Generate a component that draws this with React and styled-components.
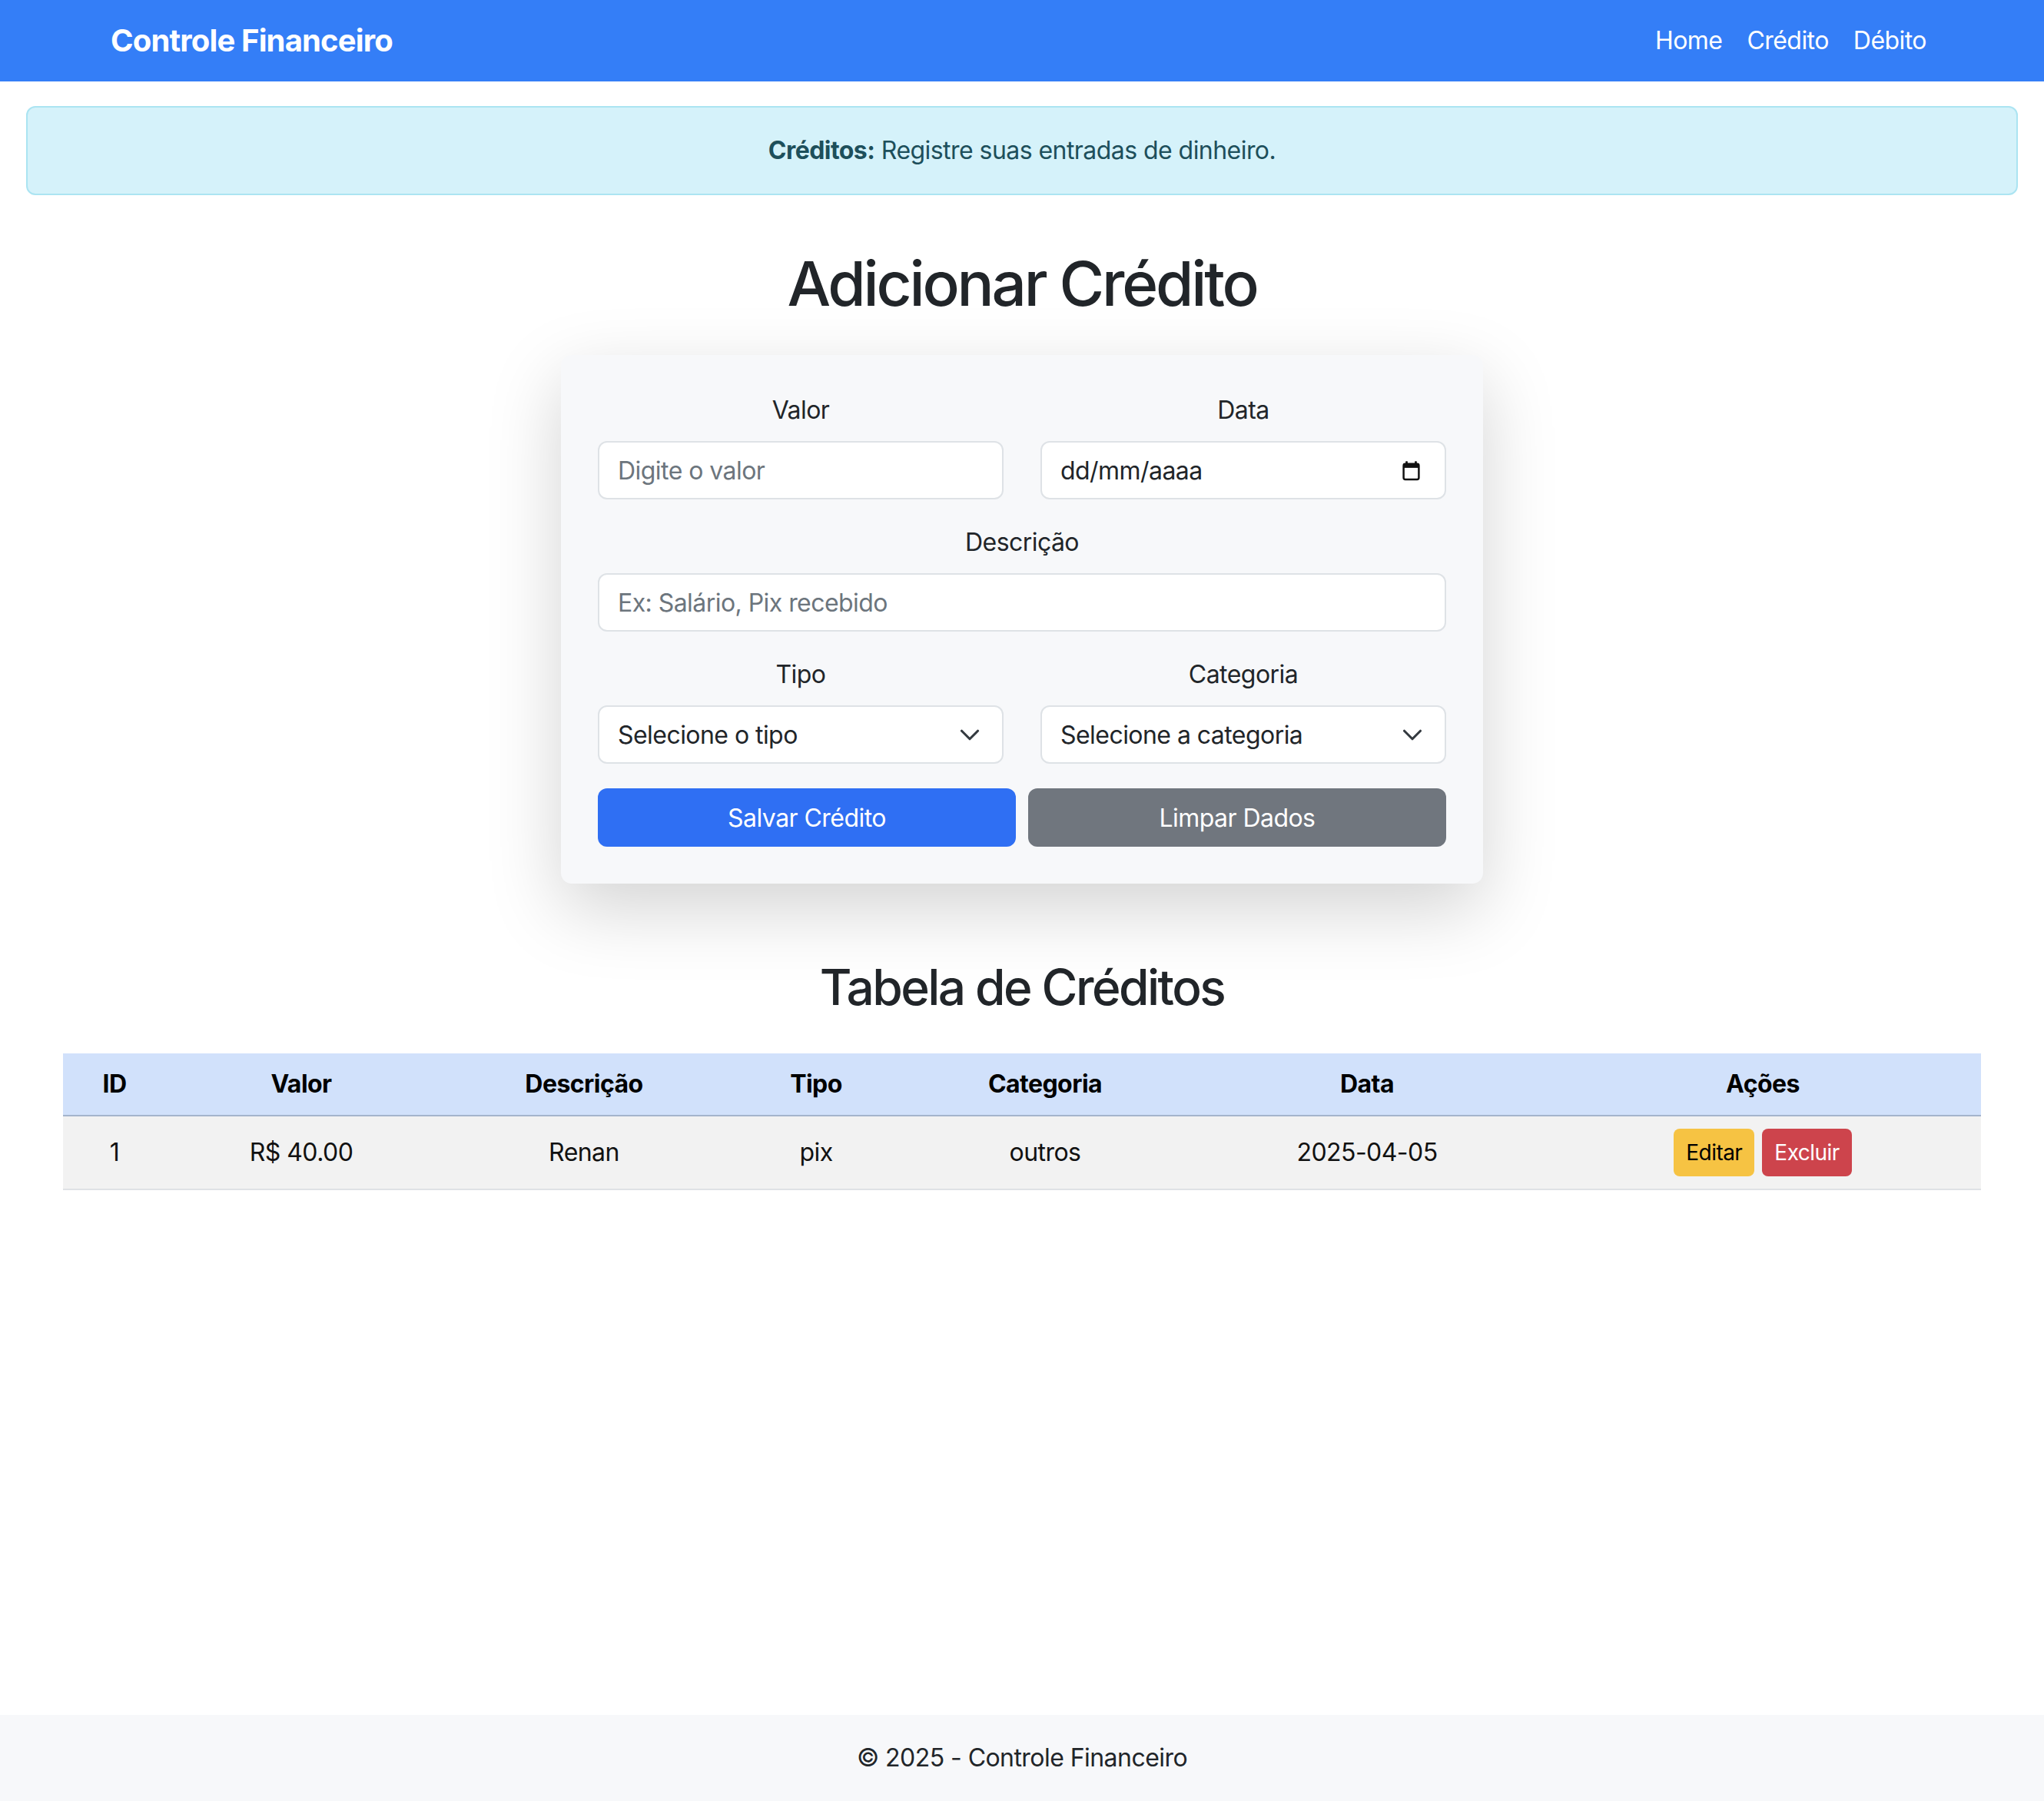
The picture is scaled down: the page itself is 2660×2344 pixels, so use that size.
import React from "react";
import styled, { createGlobalStyle } from "styled-components";

const GlobalStyle = createGlobalStyle`
  * {
    box-sizing: border-box;
  }

  body {
    margin: 0;
    font-family: Inter, "Liberation Sans", sans-serif;
    letter-spacing: -0.55px;
    color: #212529;
    background: #ffffff;
  }
`;

const credits = [
  {
    id: 1,
    valor: "R$ 40.00",
    descricao: "Renan",
    tipo: "pix",
    categoria: "outros",
    data: "2025-04-05",
  },
];

const columns = [
  { title: "ID", width: 134 },
  { title: "Valor", width: 352 },
  { title: "Descrição", width: 384 },
  { title: "Tipo", width: 220 },
  { title: "Categoria", width: 376 },
  { title: "Data", width: 462 },
  { title: "Ações", width: 568 },
];

function ChevronIcon() {
  return (
    <svg width="28" height="21" viewBox="0 0 16 12" fill="none">
      <path
        d="m2 3 6 6 6-6"
        stroke="#343a40"
        strokeWidth="1.8"
        strokeLinecap="round"
        strokeLinejoin="round"
      />
    </svg>
  );
}

function CalendarIcon() {
  return (
    <svg width="27" height="27" viewBox="0 0 24 24" fill="none">
      <rect x="5.5" y="1" width="2.4" height="4" rx="0.6" fill="#111" />
      <rect x="16.1" y="1" width="2.4" height="4" rx="0.6" fill="#111" />
      <rect
        x="3.2"
        y="4.2"
        width="17.6"
        height="18"
        rx="2"
        stroke="#111"
        strokeWidth="2.2"
      />
      <rect x="3.2" y="4.2" width="17.6" height="4.6" fill="#111" />
    </svg>
  );
}

function App() {
  return (
    <Page>
      <GlobalStyle />
      <Navbar>
        <Brand>Controle Financeiro</Brand>
        <NavLinks>
          <NavLink>Home</NavLink>
          <NavLink>Crédito</NavLink>
          <NavLink>Débito</NavLink>
        </NavLinks>
      </Navbar>

      <Main>
        <Alert>
          <strong>Créditos:</strong> Registre suas entradas de dinheiro.
        </Alert>

        <PageTitle>Adicionar Crédito</PageTitle>

        <Card>
          <FormRow>
            <Field>
              <Label>Valor</Label>
              <Input placeholder="Digite o valor" />
            </Field>
            <Field>
              <Label>Data</Label>
              <FakeInput $iconGap={30}>
                <span>dd/mm/aaaa</span>
                <CalendarIcon />
              </FakeInput>
            </Field>
          </FormRow>

          <Field>
            <Label>Descrição</Label>
            <Input placeholder="Ex: Salário, Pix recebido" />
          </Field>

          <FormRow>
            <Field>
              <Label>Tipo</Label>
              <FakeInput $iconGap={28}>
                <span>Selecione o tipo</span>
                <ChevronIcon />
              </FakeInput>
            </Field>
            <Field>
              <Label>Categoria</Label>
              <FakeInput $iconGap={28}>
                <span>Selecione a categoria</span>
                <ChevronIcon />
              </FakeInput>
            </Field>
          </FormRow>

          <ButtonRow>
            <Button $variant="primary">Salvar Crédito</Button>
            <Button $variant="secondary">Limpar Dados</Button>
          </ButtonRow>
        </Card>

        <SectionTitle>Tabela de Créditos</SectionTitle>

        <TableWrapper>
          <Table>
            <colgroup>
              {columns.map((col) => (
                <col key={col.title} style={{ width: col.width }} />
              ))}
            </colgroup>
            <thead>
              <tr>
                {columns.map((col) => (
                  <Th key={col.title}>{col.title}</Th>
                ))}
              </tr>
            </thead>
            <tbody>
              {credits.map((item) => (
                <tr key={item.id}>
                  <Td>{item.id}</Td>
                  <Td>{item.valor}</Td>
                  <Td>{item.descricao}</Td>
                  <Td>{item.tipo}</Td>
                  <Td>{item.categoria}</Td>
                  <Td>{item.data}</Td>
                  <Td>
                    <Actions>
                      <SmallButton $variant="warning">Editar</SmallButton>
                      <SmallButton $variant="danger">Excluir</SmallButton>
                    </Actions>
                  </Td>
                </tr>
              ))}
            </tbody>
          </Table>
        </TableWrapper>
      </Main>

      <Footer>© 2025 - Controle Financeiro</Footer>
    </Page>
  );
}

export default App;

const Page = styled.div`
  min-height: 100vh;
  display: flex;
  flex-direction: column;
`;

const Navbar = styled.nav`
  height: 106px;
  background: #347ef7;
  display: flex;
  align-items: center;
  justify-content: space-between;
  padding: 0 137px 0 144px;
`;

const Brand = styled.div`
  font-size: 40px;
  font-weight: 700;
  color: #ffffff;
  letter-spacing: -0.85px;
  margin-top: -2px;
`;

const NavLinks = styled.div`
  display: flex;
`;

const NavLink = styled.a`
  padding: 0 16px;
  font-size: 32px;
  line-height: 48px;
  color: #ffffff;
  cursor: pointer;
`;

const Main = styled.main`
  flex: 1;
  display: flex;
  flex-direction: column;
  padding-top: 32px;
`;

const Alert = styled.div`
  margin: 0 34px;
  padding: 32px;
  background: #d5f2fa;
  border: 2px solid #abe4f2;
  border-radius: 12px;
  color: #1d4f5b;
  font-size: 32px;
  line-height: 48px;
  text-align: center;

  strong {
    font-weight: 700;
  }
`;

const PageTitle = styled.h1`
  margin: 67px 0 45px;
  font-size: 80px;
  line-height: 96px;
  font-weight: 500;
  letter-spacing: -0.04em;
  text-align: center;
  color: #212529;
`;

const Card = styled.div`
  width: 1200px;
  margin: 0 auto;
  padding: 48px;
  background: #f7f8fa;
  border-radius: 14px;
  box-shadow: 0 32px 96px rgba(0, 0, 0, 0.175);
`;

const FormRow = styled.div`
  display: grid;
  grid-template-columns: 1fr 1fr;
  column-gap: 48px;
`;

const Field = styled.div`
  display: flex;
  flex-direction: column;
  margin-bottom: 32px;
`;

const Label = styled.label`
  font-size: 32px;
  line-height: 48px;
  text-align: center;
  margin-bottom: 16px;
  color: #212529;
`;

const Input = styled.input`
  height: 76px;
  width: 100%;
  padding: 0 24px;
  border: 2px solid #dee2e6;
  border-radius: 12px;
  background: #ffffff;
  font-family: inherit;
  font-size: 32px;
  letter-spacing: inherit;
  color: #212529;
  outline: none;

  &::placeholder {
    color: #6c757d;
  }
`;

const FakeInput = styled.div`
  height: 76px;
  display: flex;
  align-items: center;
  justify-content: space-between;
  padding: 0 ${(p) => p.$iconGap}px 0 24px;
  border: 2px solid #dee2e6;
  border-radius: 12px;
  background: #ffffff;
  font-size: 32px;
  color: #212529;
`;

const ButtonRow = styled.div`
  display: grid;
  grid-template-columns: 1fr 1fr;
  column-gap: 16px;
`;

const buttonColors = {
  primary: "#2f6ff3",
  secondary: "#70767e",
};

const Button = styled.button`
  height: 76px;
  border: none;
  border-radius: 12px;
  background: ${(p) => buttonColors[p.$variant]};
  color: #ffffff;
  font-family: inherit;
  font-size: 32px;
  letter-spacing: inherit;
  cursor: pointer;
`;

const SectionTitle = styled.h2`
  margin: 96px 0 48px;
  font-size: 64px;
  line-height: 77px;
  font-weight: 500;
  letter-spacing: -0.04em;
  text-align: center;
  color: #212529;
`;

const TableWrapper = styled.div`
  margin: 0 82px;
`;

const Table = styled.table`
  width: 100%;
  table-layout: fixed;
  border-collapse: collapse;
`;

const Th = styled.th`
  padding: 16px;
  background: #d1e1fb;
  border-bottom: 2px solid #a4b4cc;
  font-size: 32px;
  line-height: 48px;
  font-weight: 700;
  color: #000000;
  text-align: center;
`;

const Td = styled.td`
  padding: 16px;
  background: #f2f2f2;
  border-bottom: 2px solid #dfe2e5;
  font-size: 32px;
  line-height: 48px;
  color: #111111;
  text-align: center;
  vertical-align: middle;
`;

const Actions = styled.div`
  display: flex;
  justify-content: center;
  gap: 10px;
`;

const smallColors = {
  warning: { bg: "#f6c343", fg: "#000000" },
  danger: { bg: "#cd444c", fg: "#ffffff" },
};

const SmallButton = styled.button`
  height: 62px;
  padding: 0 16px;
  border: none;
  border-radius: 8px;
  background: ${(p) => smallColors[p.$variant].bg};
  color: ${(p) => smallColors[p.$variant].fg};
  font-family: inherit;
  font-size: 28px;
  letter-spacing: inherit;
  cursor: pointer;
`;

const Footer = styled.footer`
  margin-top: auto;
  padding: 32px;
  background: #f7f8fa;
  font-size: 32px;
  line-height: 48px;
  text-align: center;
  color: #212529;
`;
